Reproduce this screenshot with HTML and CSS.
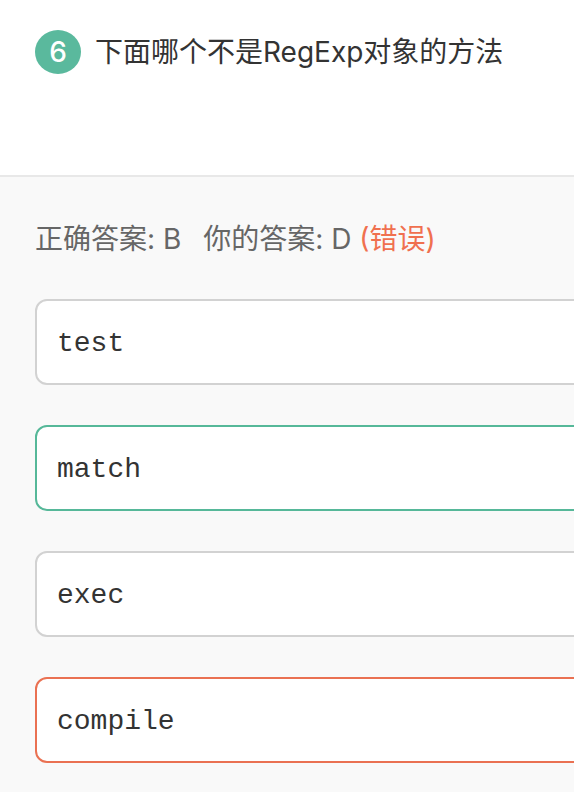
FILE: index.html
```html
<!DOCTYPE html>
<html lang="zh-CN">
<head>
<meta charset="utf-8">
<meta name="viewport" content="width=device-width, initial-scale=1">
<title>RegExp</title>
<link rel="stylesheet" href="styles.css">
</head>
<body>
<main>
  <header class="question">
    <span class="number">6</span>
    <h1 class="title">下面哪个不是RegExp对象的方法</h1>
  </header>
  <section class="result">
    <p class="summary"><span>正确答案: B</span><span class="yours">你的答案: D <span class="error">(错误)</span></span></p>
    <ul class="options">
      <li class="option">test</li>
      <li class="option correct">match</li>
      <li class="option">exec</li>
      <li class="option wrong">compile</li>
    </ul>
  </section>
</main>
</body>
</html>
```
FILE: styles.css
```css
* {
  box-sizing: border-box;
}

body {
  margin: 0;
  overflow-x: hidden;
  background: #f9f9f9;
  color: #333;
  font-family: Inter, "Noto Sans CJK SC", sans-serif;
  font-size: 28px;
  line-height: 44px;
}

.question {
  display: flex;
  align-items: flex-start;
  gap: 14px;
  min-height: 177px;
  padding: 30px 0 0 35px;
  border-bottom: 2px solid #e8e8e8;
  background: #fff;
}

.number {
  flex: none;
  width: 46px;
  height: 44px;
  border-radius: 50%;
  background: #5ab99d;
  color: #fff;
  font-weight: 500;
  text-align: center;
}

.title {
  margin: 0;
  font-size: 28px;
  font-weight: 400;
  white-space: nowrap;
}

.result {
  padding: 40px 0 28px 35px;
}

.summary {
  display: flex;
  gap: 22px;
  margin: 0 0 38px;
  color: #666;
  white-space: nowrap;
}

.error {
  color: #f0704f;
}

.options {
  display: grid;
  gap: 40px;
  margin: 0 -20px 0 0;
  padding: 0;
  list-style: none;
}

.option {
  padding: 22px 20px 18px;
  border: 2px solid #d2d2d2;
  border-radius: 12px;
  background: #fff;
  font-family: "Liberation Mono", monospace;
  line-height: 42px;
}

.correct {
  border-color: #56b899;
}

.wrong {
  border-color: #ea7152;
}
```
